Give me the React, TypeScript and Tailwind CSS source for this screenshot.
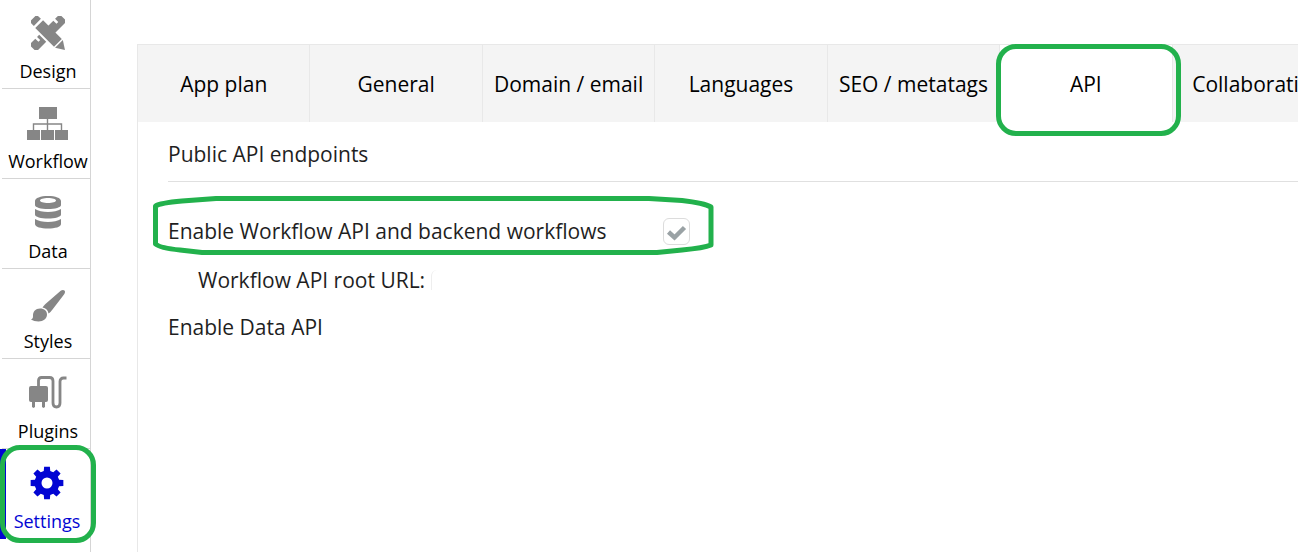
import { useState } from "react";
import type { ReactNode } from "react";

const gearPoints = () => {
  const points: string[] = [];
  for (let i = 0; i < 8; i++) {
    const base = i * 45;
    const steps = [
      [-15, 12.5],
      [-10, 16.6],
      [10, 16.6],
      [15, 12.5],
    ];
    for (const [offset, radius] of steps) {
      const angle = ((base + offset) * Math.PI) / 180;
      points.push(`${(17 + radius * Math.sin(angle)).toFixed(2)} ${(17 - radius * Math.cos(angle)).toFixed(2)}`);
    }
  }
  return points.join("L");
};

const DesignIcon = () => (
  <svg width="34" height="34" viewBox="0 0 34 34" fill="currentColor" aria-hidden="true">
    {/* ruler running under the pencil */}
    <g transform="rotate(-45 17 17)">
      <path d="M-3 12H4V16.500H6.500V12H9.500V22H-3a1.500 1.500 0 0 1-1.500-1.500V13.500A1.500 1.500 0 0 1-3 12Z" />
      <path d="M17 12H29.500V16.500H32V12H37a1.500 1.500 0 0 1 1.500 1.500V20.500a1.500 1.500 0 0 1-1.500 1.500H17Z" />
    </g>
    <g transform="rotate(45 17 17)">
      <path d="M-1.500 12H2V22H-1.500a2.500 2.500 0 0 1-2.500-2.500V14.500A2.500 2.500 0 0 1-1.500 12Z" />
      <path d="M4.500 11.500H31V22.500H4.500Z" />
      <path d="M32.500 11.500L41 17L32.500 22.500Z" />
    </g>
  </svg>
);

const WorkflowIcon = () => (
  <svg width="42" height="34" viewBox="0 0 42 34" fill="currentColor" aria-hidden="true">
    <path d="M12 1H30V13H12ZM0 24H13V34H0ZM14 24H27V34H14ZM28 24H41V34H28Z" />
    <path d="M20.500 13V24M6.500 24V18H34.500V24" fill="none" stroke="currentColor" strokeWidth="1.400" />
  </svg>
);

const DataIcon = () => (
  <svg width="26" height="34" viewBox="0 0 26 34" fill="currentColor" aria-hidden="true">
    <path
      fillRule="evenodd"
      d="M0 5C0 2 5.500 0 13 0S26 2 26 5V9C26 11.500 20 13 13 13S0 11.500 0 9ZM5 4.500C5 6 8.500 7 13 7S21 6 21 4.500S17.500 2 13 2S5 3 5 4.500Z"
    />
    <path d="M0 13C3 15 8 16 13 16S23 15 26 13V18.500C26 21 20 22.500 13 22.500S0 21 0 18.500Z" />
    <path d="M0 23C3 25 8 26 13 26S23 25 26 23V28C26 31 20 32.500 13 32.500S0 31 0 28Z" />
  </svg>
);

const StylesIcon = () => (
  <svg
    width="34"
    height="34"
    viewBox="0 -3 34 34"
    fill="currentColor"
    className="overflow-visible"
    aria-hidden="true"
  >
    <path d="M30 1.500C31.500 .5 33 .8 33.700 1.800C34.300 2.800 34 4 33 5.500L21.500 20.500C20.500 22 19 23.500 17.500 24.500C17 21.500 15 19 11.500 18.500C12.500 17 13.500 15.800 15 14.500Z" />
    <path d="M9 19.500C13.500 19.500 16 22 16 25.500C16 29.500 12.500 32.500 7.500 32.500C4.500 32.500 2 31.700 0 30.500C2 29.800 2 28.500 2 26.500C2 22.500 4.500 19.500 9 19.500Z" />
  </svg>
);

const PluginsIcon = () => (
  <svg width="38" height="34" viewBox="0 0 38 34" fill="currentColor" aria-hidden="true">
    <rect x="0" y="10" width="19" height="16" rx="2" />
    <path d="M3 25H6V31L4.500 32L3 31ZM13 25H16V31L14.500 32L13 31Z" />
    <path
      d="M9.500 11V4.500Q9.500 1.500 12.500 1.500H20.500Q24 1.500 24 5V27Q24 31 27.500 31T31 27V5.500Q31 2 34.500 2H37.500"
      fill="none"
      stroke="currentColor"
      strokeWidth="2.800"
    />
  </svg>
);

const SettingsIcon = () => (
  <svg width="34" height="34" viewBox="0 0 34 34" fill="currentColor" aria-hidden="true">
    <path fillRule="evenodd" d={`M${gearPoints()}ZM17 11.500a5.500 5.500 0 1 0 0 11a5.500 5.500 0 1 0 0-11Z`} />
  </svg>
);

const navItems: { name: string; icon: ReactNode }[] = [
  { name: "Design", icon: <DesignIcon /> },
  { name: "Workflow", icon: <WorkflowIcon /> },
  { name: "Data", icon: <DataIcon /> },
  { name: "Styles", icon: <StylesIcon /> },
  { name: "Plugins", icon: <PluginsIcon /> },
  { name: "Settings", icon: <SettingsIcon /> },
];

const tabs = [
  "App plan",
  "General",
  "Domain / email",
  "Languages",
  "SEO / metatags",
  "API",
  "Collaboration",
];

export default function App() {
  const [workflowEnabled, setWorkflowEnabled] = useState(true);

  return (
    <div className="flex min-h-screen overflow-hidden bg-white font-['Open_Sans',sans-serif] text-black">
      <nav className="-mt-px w-[91px] shrink-0 border-r border-[#d5d5d5]">
        {navItems.map((item) => {
          const active = item.name === "Settings";
          return (
            <div key={item.name} className={active ? "relative" : "pl-0.5"}>
              <button
                type="button"
                className={
                  active
                    ? "flex h-[90px] w-full flex-col items-center border-l-6 border-[#0205d3] pt-[17px] pr-0.5 text-[#0205d3]"
                    : "flex h-[90px] w-full flex-col items-center border-b border-[#d5d5d5] pt-[17px] pl-1"
                }
              >
                <span className={active ? "" : "text-[#868686]"}>{item.icon}</span>
                <span className="text-lg leading-[42px]">{item.name}</span>
              </button>
              {active && (
                <div className="pointer-events-none absolute -top-1 -right-1.5 -bottom-1 left-0 rounded-[20px] border-5 border-[#22b14c]" />
              )}
            </div>
          );
        })}
      </nav>

      <main className="min-w-0 flex-1 pt-11 pl-[46px]">
        <div className="min-h-full border-t border-l border-[#e8e8e8]">
          <div role="tablist" className="grid h-[77px] w-[1207px] grid-cols-7">
            {tabs.map((tab) => (
              <div key={tab} className="relative">
                <button
                  type="button"
                  role="tab"
                  aria-selected={tab === "API"}
                  className={
                    tab === "API"
                      ? "h-full w-full border-r border-[#e8e8e8] bg-white pt-0.5 text-[21px]"
                      : "h-full w-full border-r border-[#e8e8e8] bg-[#f4f4f4] pt-0.5 text-[21px]"
                  }
                >
                  {tab}
                </button>
                {tab === "API" && (
                  <div className="pointer-events-none absolute -top-px -right-2 -bottom-3.5 -left-1 z-10 rounded-[20px] border-5 border-[#22b14c]" />
                )}
              </div>
            ))}
          </div>

          <section className="pl-[30px] text-[21px] leading-8 text-[#1f1f1f]">
            <h2 className="border-b border-[#e0e0e0] pt-4 pb-[11px]">Public API endpoints</h2>
            <div className="relative mt-[31px] flex h-9 items-center">
              <label htmlFor="workflow-api" className="w-[495px]">
                Enable Workflow API and backend workflows
              </label>
              <span className="relative size-[27px]">
                <input
                  id="workflow-api"
                  type="checkbox"
                  checked={workflowEnabled}
                  onChange={(e) => setWorkflowEnabled(e.target.checked)}
                  className="peer block size-full appearance-none rounded-md border border-[#dcdcdc] bg-white"
                />
                <svg
                  viewBox="0 0 27 27"
                  className="pointer-events-none absolute inset-0 hidden size-full peer-checked:block"
                  aria-hidden="true"
                >
                  <path d="M5.500 14L11.500 19.500L21.500 9.500" fill="none" stroke="#9aa2a5" strokeWidth="4.500" />
                </svg>
              </span>
              <svg
                width="562"
                height="60"
                viewBox="0 0 562 60"
                className="pointer-events-none absolute -top-[17px] -left-4"
                fill="none"
                stroke="#22b14c"
                strokeWidth="5"
                strokeLinejoin="round"
                aria-hidden="true"
              >
                <path d="M3.500 10Q8 7 30 5L64 2.500H497L530 4.500Q552 7 559 11V49Q552 52 530 54L505 56.500H50L28 54Q8 52 3.500 48Z" />
              </svg>
            </div>
            <div className="mt-[13px] flex h-9 items-center pl-[30px]">
              <span>Workflow API root URL:</span>
              <span className="ml-1.5 h-5 w-2 rounded-tl-md border-l border-[#eeeeee]" />
            </div>
            <p className="mt-[13px]">Enable Data API</p>
          </section>
        </div>
      </main>
    </div>
  );
}
